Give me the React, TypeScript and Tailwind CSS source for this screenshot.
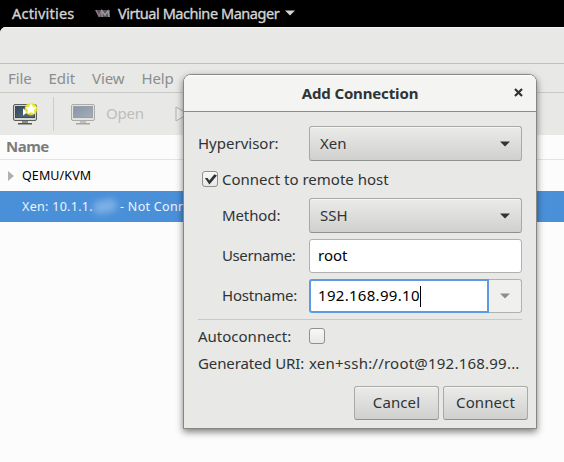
import type { ReactNode } from 'react';

const frame = 'border border-[#b1b2ae] rounded-[3px]';
const raised =
  'border border-[#a9aaa6] border-b-[#8f918c] rounded-[3px] bg-gradient-to-b from-[#ebebe9] to-[#d0d0ce] shadow-[inset_0_1px_0_#f6f6f5]';

function Caret({ fill = '#2e3436' }: { fill?: string }) {
  return (
    <svg className="h-[6px] w-[10px] shrink-0" viewBox="0 0 10 6">
      <path d="M0 .5h10L5 5.5z" fill={fill} />
    </svg>
  );
}

function Combo({ children }: { children: ReactNode }) {
  return (
    <div className={`flex h-[35px] w-[213px] items-center justify-between pr-[11px] pl-[10px] ${raised}`}>
      <span className="pb-[2px]">{children}</span>
      <Caret />
    </div>
  );
}

function Check({ checked = false }: { checked?: boolean }) {
  return (
    <span className="flex h-4 w-4 shrink-0 items-center justify-center rounded-[3px] border border-[#8f918c] bg-gradient-to-b from-[#f8f8f7] to-[#e8e8e6]">
      {checked && (
        <svg className="h-[14px] w-[14px]" viewBox="0 0 14 14">
          <path d="M1.9 6 4.6 6l1.7 2.4L11.4 2.2 14 3.6 6.4 12.4z" fill="#2e3436" />
        </svg>
      )}
    </span>
  );
}

function Monitor({ fresh = false }: { fresh?: boolean }) {
  return (
    <svg className="h-6 w-[26px] shrink-0" viewBox="0 0 26 24">
      <defs>
        <linearGradient id={fresh ? 'scrA' : 'scrB'} x1="0" y1="0" x2="1" y2="1">
          <stop offset="0" stopColor={fresh ? '#34485a' : '#8795a5'} />
          <stop offset="1" stopColor={fresh ? '#5c6e81' : '#a5adb8'} />
        </linearGradient>
        <radialGradient id="glow">
          <stop offset="0.5" stopColor="#f4ee30" />
          <stop offset="0.8" stopColor="#f0ec25" stopOpacity=".85" />
          <stop offset="1" stopColor="#f0ec40" stopOpacity="0" />
        </radialGradient>
      </defs>
      <rect x="1.5" y="2.5" width="23" height="16" rx="1.5" fill={fresh ? '#d6d6d2' : '#e3e3e0'} stroke={fresh ? '#5b5e5a' : '#aaaca9'} />
      <rect x="3.5" y="4.5" width="19" height="11" fill={`url(#${fresh ? 'scrA' : 'scrB'})`} stroke={fresh ? '#3d4b58' : '#979fa8'} />
      <path d="M10 19h6v2h-6z" fill={fresh ? '#8b8d89' : '#c0c1be'} />
      <path d="M6 21.8h14" stroke={fresh ? '#555753' : '#a5a6a4'} strokeWidth="1.6" />
      {fresh && (
        <>
          <path d="M11 6.5v7l5-3.5z" fill="#fff" />
          <circle cx="19" cy="7" r="7" fill="url(#glow)" />
          <path d="m19 1 1.8 3.7 4 .5-2.9 2.8.7 4-3.6-1.9-3.6 1.9.7-4-2.9-2.8 4-.5z" fill="#fff" />
        </>
      )}
    </svg>
  );
}

function Dialog() {
  return (
    <div className="absolute top-[74px] left-[183px] h-[355px] w-[354px] rounded-t-[8px] border border-[#858783] bg-[#e8e8e6] text-[#2e3436] shadow-[0_3px_7px_rgba(0,0,0,.5)]">
      <div className="flex h-[37px] items-center rounded-t-[7px] border-b border-[#8b8d88] bg-[#f4f4f3] pr-[13px] shadow-[inset_0_1px_0_#fff]">
        <div className="flex-1 pl-[22px] text-center text-[15px] font-bold tracking-[-0.15px]">Add Connection</div>
        <svg className="mb-px h-[9px] w-[9px]" viewBox="0 0 9 9">
          <path d="m1 1 7 7M8 1 1 8" stroke="#2e3436" strokeWidth="2.2" />
        </svg>
      </div>
      <div className="px-[14px] pt-[14px]">
        <div className="flex items-center">
          <span className="w-[111px] pb-[2px]">Hypervisor:</span>
          <Combo>Xen</Combo>
        </div>
        <div className="flex h-[37px] items-center gap-1 pb-px pl-1">
          <Check checked />
          <span>Connect to remote host</span>
        </div>
        <div className="flex items-center pl-6">
          <span className="w-[87px] pb-[2px] tracking-[-0.1px]">Method:</span>
          <Combo>SSH</Combo>
        </div>
        <div className="mt-[6px] flex items-center pl-6">
          <span className="w-[87px] pb-[2px] tracking-[-0.4px]">Username:</span>
          <div className={`flex h-[34px] w-[213px] items-center bg-white pb-[2px] pl-2 text-black ${frame}`}>root</div>
        </div>
        <div className="mt-[6px] flex items-center pl-6">
          <span className="w-[87px] pb-[2px] tracking-[-0.2px]">Hostname:</span>
          <div className="flex h-[34px] w-[180px] items-center rounded-l-[3px] border-2 border-[#5f9ade] bg-white pl-[7px] text-black">
            <span className="pb-[2px] tracking-[0.3px]">192.168.99.10</span>
            <span className="h-[21px] w-px bg-black" />
          </div>
          <div className="flex h-[34px] w-[33px] items-center justify-center rounded-r-[3px] border border-l-0 border-[#b1b2ae] bg-[#f0f0ef]">
            <Caret fill="#8b8e8f" />
          </div>
        </div>
        <div className="mt-[6px] h-px bg-[#c9cac7]" />
        <div className="flex h-[32px] items-center">
          <span className="w-[111px]">Autoconnect:</span>
          <Check />
        </div>
        <div className="flex h-[24px] items-center pb-[2px] whitespace-nowrap">
          <span className="w-[111px] tracking-[-0.12px]">Generated URI:</span>
          <span className="tracking-[0.22px]">xen+ssh://root@192.168.99...</span>
        </div>
      </div>
      <div className="mt-[10px] flex justify-end gap-1 pr-2">
        <div className={`flex h-[34px] w-[85px] items-center justify-center pb-[2px] tracking-[0.1px] ${raised}`}>Cancel</div>
        <div className={`flex h-[34px] w-[85px] items-center justify-center pb-[2px] tracking-[0.1px] ${raised}`}>Connect</div>
      </div>
    </div>
  );
}

export default function App() {
  return (
    <div className="relative h-[462px] w-[564px] overflow-hidden bg-black font-['Noto_Sans','Open_Sans',sans-serif] text-[15px] leading-5">
      <div className="flex h-[27px] items-center pb-px pl-3 text-[#d4d4d4] [-webkit-text-stroke:0.35px_#d4d4d4]">
        <span className="w-[83px] pb-px text-[14.5px] tracking-[0.2px]">Activities</span>
        <svg className="mr-[7px] h-[9px] w-[16px]" viewBox="0 0 16 9">
          <path d="M0 1h15v7H4z" fill="#56545a" />
          <path d="m1 1 3 6 3-6" fill="none" stroke="#94797f" strokeWidth="1.5" />
          <path d="M7 8V2l3 4 3-4 1 6" fill="none" stroke="#939da0" strokeWidth="1.4" />
        </svg>
        <span className="w-[167px] pb-px text-[14.5px] tracking-[-0.45px] whitespace-nowrap">Virtual Machine Manager</span>
        <Caret fill="#d4d4d4" />
      </div>
      <div className="h-[435px] overflow-hidden rounded-tl-[6px] bg-[#fcfcfc]">
        <div className="h-[37px] border-b border-[#c0c1be] bg-[#e8e8e6] shadow-[inset_0_1px_0_#f4f4f3]" />
        <div className="flex h-[29px] items-center gap-[17px] border-b border-[#c9cac7] bg-[#e8e8e6] pl-2 tracking-[-0.1px] text-[#8b8e8f]">
          <span>File</span>
          <span>Edit</span>
          <span>View</span>
          <span>Help</span>
        </div>
        <div className="flex h-[42px] items-center bg-[#e8e8e6] pl-3">
          <Monitor fresh />
          <div className="mr-[16px] ml-[15px] h-[34px] w-px bg-[#cccdca]" />
          <Monitor />
          <span className="ml-[10px] w-[69px] pb-[2px] tracking-[-0.25px] text-[#bdbebc]">Open</span>
          <svg className="h-[16px] w-[14px]" viewBox="0 0 14 16">
            <path d="M1 1v14l12-7z" fill="#eeeeec" stroke="#b0b1af" />
          </svg>
        </div>
        <div className="flex h-[25px] items-center border-b border-[#e4e4e3] pb-[2px] pl-[6px] font-bold tracking-[-0.5px] text-[#7b7d7d]">Name</div>
        <div className="flex h-[31px] items-center pl-2 text-[12.5px] tracking-[0.1px] text-black">
          <svg className="mr-2 h-[10px] w-[6px]" viewBox="0 0 6 10">
            <path d="M0 0v10l6-5z" fill="#b0b0b0" />
          </svg>
          QEMU/KVM
        </div>
        <div className="flex h-[31px] items-center bg-[#4a90d9] pl-[22px] text-[12.5px] tracking-[0.3px] whitespace-nowrap text-[#edf4fb]">
          Xen: 10.1.1.
          <span className="relative h-[15px] w-[24px]">
            <span className="absolute inset-x-0 inset-y-px -rotate-12 rounded-full bg-[#9fc5ec] opacity-60 blur-[3px]" />
          </span>
          <span className="ml-[3px]">- Not Connected</span>
        </div>
      </div>
      <Dialog />
    </div>
  );
}
